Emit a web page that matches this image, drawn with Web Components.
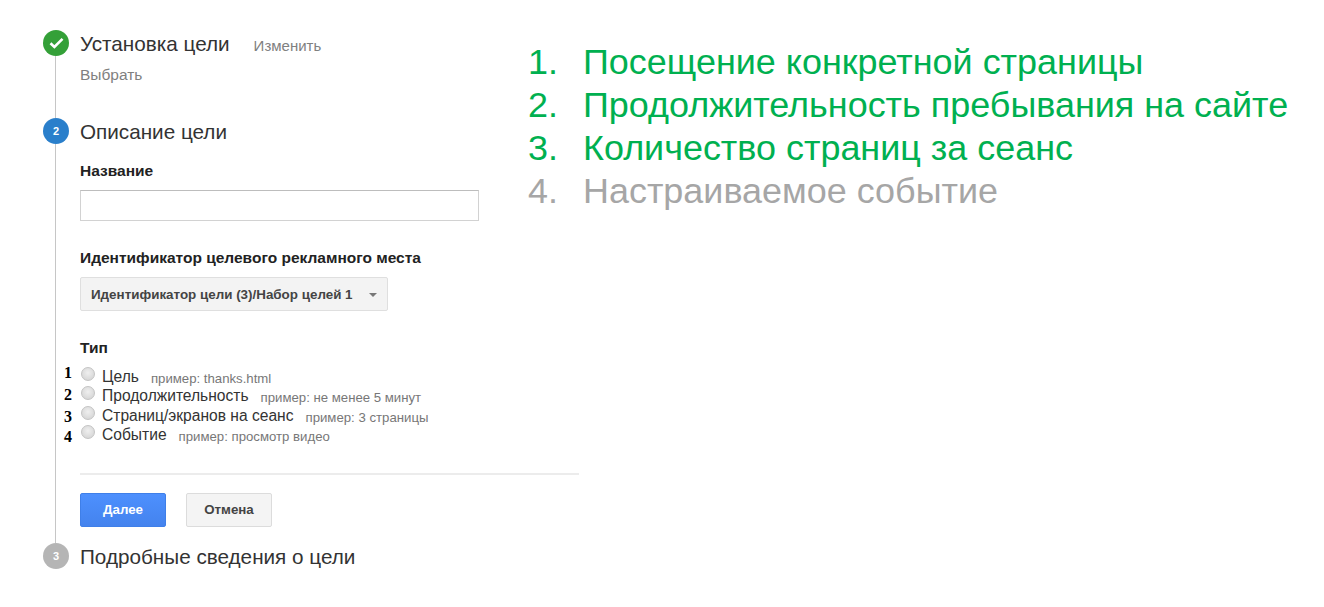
<!DOCTYPE html>
<html lang="ru">
<head>
<meta charset="utf-8">
<title>Цель</title>
<style>
  html, body { margin: 0; background: #fff; }
  body { font-family: "Liberation Sans", Arial, sans-serif; color: #222; }
  goal-page { width: 1324px; height: 607px; }
</style>
</head>
<body>
<goal-page>
  <goal-stepper slot="left">
    <goal-step state="done" title-text="Установка цели" action="Изменить" height="88">
      <span class="pick">Выбрать</span>
    </goal-step>
    <goal-step state="active" number="2" title-text="Описание цели" height="425">
      <goal-field label="Название" top="19"><goal-input></goal-input></goal-field>
      <goal-field label="Идентификатор целевого рекламного места" top="29">
        <goal-select>Идентификатор цели (3)/Набор целей 1</goal-select>
      </goal-field>
      <goal-field label="Тип" top="29">
        <goal-radio mark="1" mark-top="-2" hint="пример: thanks.html">Цель</goal-radio>
        <goal-radio mark="2" mark-top="1" hint="пример: не менее 5 минут">Продолжительность</goal-radio>
        <goal-radio mark="3" mark-top="3" hint="пример: 3 страницы">Страниц/экранов на сеанс</goal-radio>
        <goal-radio mark="4" mark-top="4" hint="пример: просмотр видео">Событие</goal-radio>
      </goal-field>
      <goal-actions>
        <goal-button kind="primary">Далее</goal-button>
        <goal-button>Отмена</goal-button>
      </goal-actions>
    </goal-step>
    <goal-step state="idle" number="3" title-text="Подробные сведения о цели" last></goal-step>
  </goal-stepper>
  <goal-list slot="right">
    <goal-item number="1." tone="on">Посещение конкретной страницы</goal-item>
    <goal-item number="2." tone="on">Продолжительность пребывания на сайте</goal-item>
    <goal-item number="3." tone="on">Количество страниц за сеанс</goal-item>
    <goal-item number="4." tone="off">Настраиваемое событие</goal-item>
  </goal-list>
</goal-page>

<script>
// small helper, every element below does the same thing in its constructor
function shadow(el, html) {
  el.attachShadow({ mode: 'open' });
  el.shadowRoot.innerHTML = html;
}

class GoalPage extends HTMLElement {
  constructor() {
    super();
    shadow(this, `
      <style>
        :host { display: flex; box-sizing: border-box; padding: 30px 0 0 43px; }
        .left { width: 485px; flex: none; }
        .right { flex: 1; }
      </style>
      <div class="left"><slot name="left"></slot></div>
      <div class="right"><slot name="right"></slot></div>`);
  }
}

class GoalStepper extends HTMLElement {
  constructor() {
    super();
    shadow(this, `
      <style>:host { display: flex; flex-direction: column; }</style>
      <slot></slot>`);
  }
}

class GoalStep extends HTMLElement {
  connectedCallback() {
    const state = this.getAttribute('state');
    const number = this.getAttribute('number') || '';
    const action = this.getAttribute('action');
    const height = this.getAttribute('height');
    const badge = state === 'done'
      ? `<svg width="15" height="12" viewBox="0 0 15 12"><path d="M1.5 6.2 5.4 10 13.5 1.8" fill="none" stroke="#fff" stroke-width="2.6"/></svg>`
      : number;
    shadow(this, `
      <style>
        :host {
          display: grid;
          grid-template-columns: 26px 1fr;
          column-gap: 11px;
          ${height ? `height: ${height}px;` : ''}
        }
        .rail { display: flex; flex-direction: column; align-items: center; }
        .badge {
          width: 26px; height: 26px; flex: none; border-radius: 50%;
          display: flex; align-items: center; justify-content: center;
          color: #fff; font-size: 11px; font-weight: bold;
        }
        .done { background: #34a038; }
        .active { background: #2a7fcb; }
        .idle { background: #b5b5b5; }
        .line { flex: 1; width: 1px; margin-right: 1px; background: #c6c6c6; }
        .head { display: flex; align-items: baseline; height: 26px; line-height: 28px; }
        h2 { margin: 0; font-size: 20.7px; font-weight: normal; color: #333; white-space: nowrap; }
        .action { margin-left: 24px; font-size: 15px; color: #808080; }
        ::slotted(.pick) { display: block; margin-top: 10px; font-size: 15.5px; line-height: 18px; color: #808080; }
      </style>
      <div class="rail">
        <div class="badge ${state}">${badge}</div>
        ${this.hasAttribute('last') ? '' : '<div class="line"></div>'}
      </div>
      <div class="body">
        <div class="head">
          <h2>${this.getAttribute('title-text')}</h2>
          ${action ? `<span class="action">${action}</span>` : ''}
        </div>
        <slot></slot>
      </div>`);
  }
}

class GoalField extends HTMLElement {
  connectedCallback() {
    const top = this.getAttribute('top') || 0;
    shadow(this, `
      <style>
        :host { display: block; margin-top: ${top}px; }
        .label { font-size: 15.5px; line-height: 16px; font-weight: bold; color: #222; margin-bottom: 11px; }
      </style>
      <div class="label">${this.getAttribute('label')}</div>
      <slot></slot>`);
  }
}

class GoalInput extends HTMLElement {
  constructor() {
    super();
    shadow(this, `
      <style>
        :host { display: block; width: 399px; }
        input {
          display: block; box-sizing: border-box; width: 100%; height: 31px; margin: 0; padding: 0 6px;
          background: #fff; outline: none;
          border: 1px solid #d2d2d2; border-top-color: #bdbdbd; border-radius: 0;
        }
      </style>
      <input type="text">`);
  }
}

class GoalSelect extends HTMLElement {
  constructor() {
    super();
    shadow(this, `
      <style>
        :host {
          display: flex; align-items: center; box-sizing: border-box;
          width: 308px; height: 34px; padding: 0 10px;
          background: #f3f3f3; border: 1px solid #dfdfdf; border-radius: 2px;
          font-size: 13.4px; font-weight: bold; color: #444; white-space: nowrap;
        }
        .arrow {
          margin-left: auto; margin-top: 2px; width: 0; height: 0;
          border-left: 4px solid transparent; border-right: 4px solid transparent; border-top: 4px solid #777;
        }
      </style>
      <slot></slot><span class="arrow"></span>`);
  }
}

class GoalRadio extends HTMLElement {
  connectedCallback() {
    shadow(this, `
      <style>
        :host { display: block; position: relative; height: 19.4px; }
        .mark {
          position: absolute; left: -16px; top: ${this.getAttribute('mark-top')}px;
          font: bold 16px/16px "Liberation Serif", serif; color: #000;
        }
        .row { display: flex; align-items: baseline; }
        .dot {
          flex: none; align-self: flex-start; box-sizing: border-box;
          width: 14px; height: 14px; margin: 0 7px 0 1px; border-radius: 50%;
          border: 1px solid #c4c4c4;
          background: radial-gradient(circle at 50% 40%, #efefef, #d0d0d0);
        }
        .text { font-size: 15.6px; line-height: 17px; color: #333; white-space: nowrap; position: relative; top: 1px; }
        .hint { margin-left: 12px; font-size: 13.2px; color: #777; white-space: nowrap; position: relative; top: 2px; }
      </style>
      <span class="mark">${this.getAttribute('mark')}</span>
      <div class="row">
        <span class="dot"></span>
        <span class="text"><slot></slot></span>
        <span class="hint">${this.getAttribute('hint')}</span>
      </div>`);
  }
}

class GoalActions extends HTMLElement {
  constructor() {
    super();
    shadow(this, `
      <style>
        :host {
          display: flex; gap: 20px; width: 499px; box-sizing: border-box;
          margin-top: 28px; padding-top: 18px;
          border-top: 2px solid #ececec;
        }
      </style>
      <slot></slot>`);
  }
}

class GoalButton extends HTMLElement {
  connectedCallback() {
    const primary = this.getAttribute('kind') === 'primary';
    shadow(this, `
      <style>
        :host {
          display: flex; align-items: center; justify-content: center; box-sizing: border-box;
          width: 86px; height: 34px; border-radius: 2px;
          font-size: 13.3px; font-weight: bold;
          ${primary
            ? 'background: linear-gradient(#4d90fe, #4483ee); border: 1px solid #3f7fe8; color: #fff;'
            : 'background: #f4f4f4; border: 1px solid #dcdcdc; color: #444;'}
        }
      </style>
      <slot></slot>`);
  }
}

class GoalList extends HTMLElement {
  constructor() {
    super();
    shadow(this, `
      <style>:host { display: block; padding-top: 10px; }</style>
      <slot></slot>`);
  }
}

class GoalItem extends HTMLElement {
  connectedCallback() {
    const color = this.getAttribute('tone') === 'on' ? '#00b050' : '#a6a6a6';
    shadow(this, `
      <style>
        :host {
          display: grid; grid-template-columns: 55px 1fr;
          font-size: 35.95px; line-height: 43px; color: ${color}; white-space: nowrap;
        }
      </style>
      <span>${this.getAttribute('number')}</span>
      <span><slot></slot></span>`);
  }
}

customElements.define('goal-page', GoalPage);
customElements.define('goal-stepper', GoalStepper);
customElements.define('goal-step', GoalStep);
customElements.define('goal-field', GoalField);
customElements.define('goal-input', GoalInput);
customElements.define('goal-select', GoalSelect);
customElements.define('goal-radio', GoalRadio);
customElements.define('goal-actions', GoalActions);
customElements.define('goal-button', GoalButton);
customElements.define('goal-list', GoalList);
customElements.define('goal-item', GoalItem);
</script>
</body>
</html>
